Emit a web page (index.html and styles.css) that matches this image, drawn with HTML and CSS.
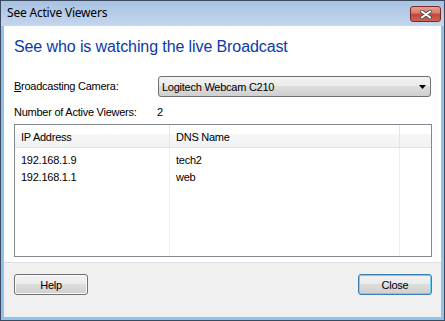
FILE: index.html
```html
<!DOCTYPE html>
<html>
<head>
<meta charset="utf-8">
<link rel="stylesheet" href="styles.css">
</head>
<body>
<div class="window">
  <div class="titlebar">
    <span class="title">See Active Viewers</span>
    <span class="close-btn">
      <svg width="12" height="9" viewBox="0 0 12 9">
        <path d="M1.8 1.5 L10.2 7.5 M10.2 1.5 L1.8 7.5" stroke="#4a4a4a" stroke-width="3.4" stroke-linecap="round" fill="none"/>
        <path d="M1.8 1.5 L10.2 7.5 M10.2 1.5 L1.8 7.5" stroke="#ffffff" stroke-width="2" stroke-linecap="round" fill="none"/>
      </svg>
    </span>
  </div>
  <div class="client">
    <div class="main">
      <h1 class="instruction">See who is watching the live Broadcast</h1>
      <div class="field-row">
        <label class="field-label"><u>B</u>roadcasting Camera:</label>
        <div class="combo">
          <span>Logitech Webcam C210</span>
          <svg class="combo-arrow" width="7" height="4" viewBox="0 0 7 4"><path d="M0 0 H7 L3.5 4 Z" fill="#000"/></svg>
        </div>
      </div>
      <div class="count-row">
        <span class="count-label">Number of Active Viewers:</span>
        <span>2</span>
      </div>
      <div class="listview">
        <div class="col col-ip">
          <div class="hdr">IP Address</div>
          <div class="rows">
            <div class="cell">192.168.1.9</div>
            <div class="cell">192.168.1.1</div>
          </div>
        </div>
        <div class="col col-dns">
          <div class="hdr">DNS Name</div>
          <div class="rows">
            <div class="cell">tech2</div>
            <div class="cell">web</div>
          </div>
        </div>
        <div class="col col-fill">
          <div class="hdr"></div>
        </div>
      </div>
    </div>
    <div class="footer">
      <button class="btn">Help</button>
      <button class="btn btn-default">Close</button>
    </div>
  </div>
</div>
</body>
</html>
```

FILE: styles.css
```css
html, body {
  margin: 0;
  padding: 0;
  background: #ffffff;
}

body {
  font-family: "Liberation Sans", Arial, sans-serif;
  font-size: 11px;
  letter-spacing: -0.25px;
  color: #000;
}

.window {
  width: 445px;
  height: 321px;
  box-sizing: border-box;
  border: 1px solid #3b4a5e;
  background: #8fc3ec;
  padding: 0 3px 3px 3px;
  display: flex;
  flex-direction: column;
}

.titlebar {
  height: 25px;
  margin: 0 -3px;
  padding: 0 3px 0 6px;
  background: linear-gradient(#a9c2e2, #c3d6ee);
  display: flex;
  justify-content: space-between;
  align-items: flex-start;
  flex-shrink: 0;
}

.title {
  font-family: "Noto Sans", "Open Sans", sans-serif;
  font-size: 12px;
  letter-spacing: -0.2px;
  line-height: 16px;
  padding-top: 4px;
  color: #000;
}

.close-btn {
  margin-top: 5px;
  width: 31px;
  height: 16px;
  box-sizing: border-box;
  border: 1px solid #7a2a24;
  border-radius: 3px;
  background: linear-gradient(#e6a196 0%, #d4786b 45%, #c0463a 50%, #cf6354 100%);
  display: flex;
  align-items: center;
  justify-content: center;
}

.client {
  flex: 1;
  background: #ffffff;
  display: flex;
  flex-direction: column;
}

.main {
  flex: 1;
  padding: 11px 9px 0 10px;
}

.instruction {
  margin: 0;
  font-size: 16px;
  font-weight: normal;
  line-height: 20px;
  letter-spacing: -0.1px;
  color: #0a3aa6;
}

.field-row {
  margin-top: 19px;
  display: flex;
  align-items: center;
}

.field-label {
  width: 144px;
  flex-shrink: 0;
  line-height: 13px;
}

.combo {
  width: 273px;
  height: 21px;
  box-sizing: border-box;
  border: 1px solid #707070;
  border-radius: 3px;
  background: linear-gradient(#f2f2f2 0%, #ebebeb 50%, #dddddd 50%, #cfcfcf 100%);
  display: flex;
  align-items: center;
  justify-content: space-between;
  padding: 0 4px 0 3px;
}

.count-row {
  margin-top: 9px;
  display: flex;
  line-height: 13px;
}

.count-label {
  width: 143px;
}

.listview {
  margin-top: 5px;
  height: 133px;
  box-sizing: border-box;
  border: 1px solid #828790;
  display: flex;
}

.col {
  box-sizing: border-box;
  border-right: 1px solid #eeeff1;
}

.col-ip { width: 155px; }
.col-dns { width: 230px; }
.col-fill { flex: 1; border-right: none; }

.hdr {
  height: 23px;
  box-sizing: border-box;
  padding: 6px 0 0 6px;
  line-height: 13px;
  background: linear-gradient(#ffffff 0%, #ffffff 42%, #f6f7f8 42%, #f1f2f4 100%);
  border-bottom: 1px solid #e3e4e6;
  margin-right: -1px;
  border-right: 1px solid #e3e5e8;
}

.col-fill .hdr {
  margin-right: 0;
  border-right: none;
}

.rows {
  padding-top: 4px;
}

.cell {
  height: 17px;
  line-height: 17px;
  padding-left: 6px;
}

.footer {
  height: 43px;
  flex-shrink: 0;
  border-top: 1px solid #dfdfdf;
  background: #f0f0f0;
  display: flex;
  justify-content: space-between;
  align-items: flex-start;
  padding: 11px 9px 0 10px;
}

.btn {
  width: 74px;
  height: 21px;
  box-sizing: border-box;
  border: 1px solid #707070;
  border-radius: 3px;
  background: linear-gradient(#f2f2f2 0%, #ebebeb 50%, #dddddd 50%, #cfcfcf 100%);
  box-shadow: inset 0 0 0 1px #fbfbfb;
  font-family: "Liberation Sans", Arial, sans-serif;
  font-size: 11px;
  letter-spacing: -0.25px;
  color: #000;
  padding: 0;
}

.btn-default {
  border-color: #3c7fb1;
  box-shadow: inset 0 0 0 1px #6fd0f5;
}
```
